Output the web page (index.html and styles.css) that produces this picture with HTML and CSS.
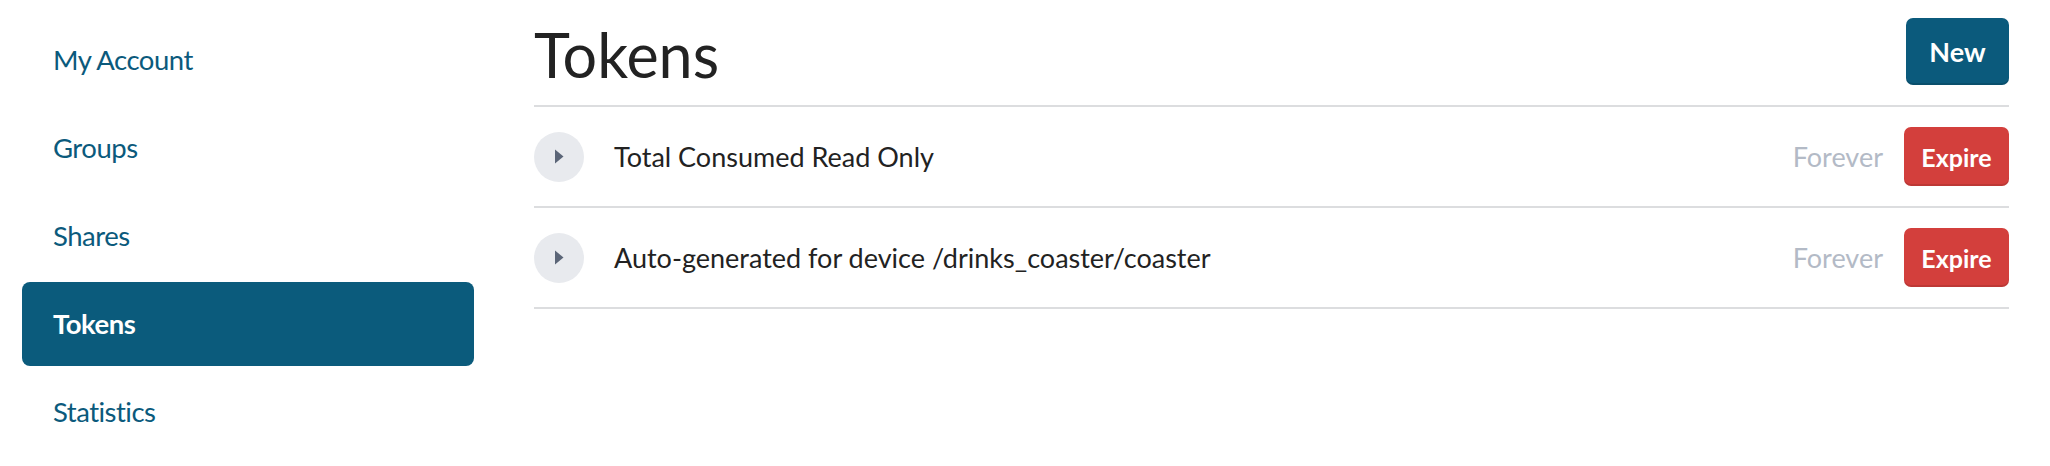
FILE: index.html
```html
<!DOCTYPE html>
<html>
<head>
<meta charset="utf-8">
<link rel="stylesheet" href="styles.css">
</head>
<body>
<div class="page">
  <nav class="sidebar">
    <a class="nav-item">My Account</a>
    <a class="nav-item">Groups</a>
    <a class="nav-item">Shares</a>
    <a class="nav-item active">Tokens</a>
    <a class="nav-item">Statistics</a>
  </nav>
  <main class="main">
    <header class="header">
      <h1 class="title">Tokens</h1>
      <button class="btn btn-new">New</button>
    </header>
    <div class="row">
      <span class="toggle"><svg width="10" height="15" viewBox="0 0 10 15"><path d="M1 0.5 L9.5 7.5 L1 14.5 Z" fill="#5b6577"/></svg></span>
      <span class="name">Total Consumed Read Only</span>
      <span class="expiry">Forever</span>
      <button class="btn btn-expire">Expire</button>
    </div>
    <div class="row">
      <span class="toggle"><svg width="10" height="15" viewBox="0 0 10 15"><path d="M1 0.5 L9.5 7.5 L1 14.5 Z" fill="#5b6577"/></svg></span>
      <span class="name">Auto-generated for device /drinks_coaster/coaster</span>
      <span class="expiry">Forever</span>
      <button class="btn btn-expire">Expire</button>
    </div>
  </main>
</div>
</body>
</html>
```
FILE: styles.css
```css
* { box-sizing: border-box; }
body {
  margin: 0;
  background: #fff;
  font-family: Lato, "Noto Sans", "Liberation Sans", sans-serif;
}
.page {
  display: flex;
  padding: 0 41px 0 22px;
}
.sidebar {
  width: 452px;
  flex: none;
  display: flex;
  flex-direction: column;
  gap: 4px;
  padding-top: 18px;
}
.nav-item {
  display: block;
  height: 84px;
  line-height: 84px;
  padding-left: 31px;
  font-size: 27.5px;
  letter-spacing: -0.5px;
  color: #0b5a7c;
  border-radius: 8px;
}
.nav-item.active {
  background: #0b5b7c;
  color: #fff;
  font-weight: 700;
}
.main {
  flex: 1;
  margin-left: 60px;
}
.header {
  height: 107px;
  border-bottom: 2px solid #dcdddf;
  display: flex;
  justify-content: space-between;
  align-items: flex-start;
}
.title {
  margin: 0;
  font-weight: 400;
  font-size: 61px;
  line-height: 1;
  color: #222;
  padding-top: 24px;
}
.btn {
  font-family: inherit;
  border: 0;
  color: #fff;
  font-weight: 700;
  border-radius: 7px;
  cursor: pointer;
}
.btn-new {
  margin-top: 18px;
  width: 103px;
  height: 67px;
  font-size: 27px;
  background: #0b5a7c;
  box-shadow: inset 0 -2px 0 rgba(0,0,0,0.12);
}
.row {
  height: 101px;
  border-bottom: 2px solid #dcdddf;
  display: flex;
  align-items: center;
}
.toggle {
  width: 50px;
  height: 50px;
  border-radius: 50%;
  background: #e8eaee;
  display: flex;
  align-items: center;
  justify-content: center;
  flex: none;
}
.name {
  margin-left: 30px;
  flex: 1;
  font-size: 27px;
  color: #222;
}
.expiry {
  font-size: 27px;
  color: #b3bac6;
  margin-right: 21px;
}
.btn-expire {
  width: 105px;
  height: 59px;
  font-size: 25px;
  background: #d33f3c;
  box-shadow: inset 0 -2px 0 rgba(0,0,0,0.1);
}
```
